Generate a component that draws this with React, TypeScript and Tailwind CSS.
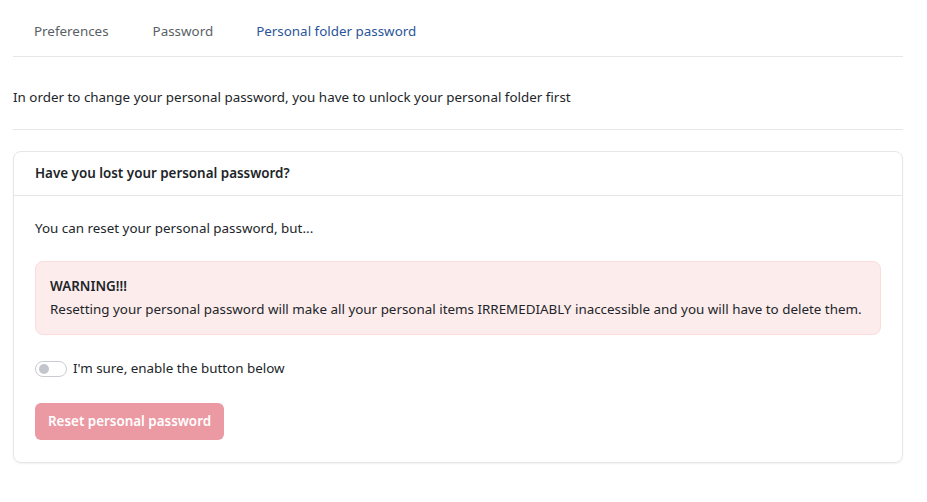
import { useState } from "react";

export default function App() {
  const [sure, setSure] = useState(false);

  return (
    <div className="min-h-screen bg-white px-[13px] text-[13.4px] text-[#212529] [font-family:'Noto_Sans',sans-serif]">
      {/* Tabs */}
      <div className="flex w-[890px] border-b border-[#e4e6e8]">
        <div className="pl-[21px] pr-[22px] pt-[21px] pb-[14px] leading-[21px] text-[#5a5f66]">Preferences</div>
        <div className="pl-[22px] pr-[21px] pt-[21px] pb-[14px] leading-[21px] text-[#5a5f66]">Password</div>
        <div className="px-[22px] pt-[21px] pb-[14px] leading-[21px] text-[#2a5599]">Personal folder password</div>
      </div>

      <p className="mt-[30px] mb-[21px] leading-[21px]">
        In order to change your personal password, you have to unlock your personal folder first
      </p>
      <div className="w-[890px] border-t border-[#e4e6e8]" />

      {/* Card */}
      <div className="mt-[21px] w-[890px] rounded-lg border border-[#e4e6e8] shadow-[0_1px_2px_rgba(0,0,0,0.06)]">
        <div className="flex h-[44px] items-center border-b border-[#e4e6e8] px-[21px] font-semibold">
          Have you lost your personal password?
        </div>
        <div className="px-[21px] pt-[22px] pb-[22px]">
          <p className="leading-[21px]">You can reset your personal password, but...</p>

          <div className="mt-[22px] rounded-lg border border-[#fadcdc] bg-[#fdecec] px-[14px] pt-[13px] pb-[13px] leading-[23px]">
            <div className="font-semibold">WARNING!!!</div>
            <div className="whitespace-nowrap">
              Resetting your personal password will make all your personal items IRREMEDIABLY inaccessible and you will have to delete them.
            </div>
          </div>

          <label className="mt-[23px] flex items-center gap-[6px] leading-[21px]">
            <button
              type="button"
              onClick={() => setSure(!sure)}
              className="flex h-[16px] w-[32px] items-center rounded-full border border-[#c9ccd1] bg-white px-[3px]"
            >
              <span className="h-[10px] w-[10px] rounded-full bg-[#c3c6cc]" />
            </button>
            I'm sure, enable the button below
          </label>

          <button
            type="button"
            disabled={!sure}
            className="mt-[24px] h-[37px] rounded-md bg-[#eb99a3] px-[13px] text-[13.4px] font-semibold text-white"
          >
            Reset personal password
          </button>
        </div>
      </div>
    </div>
  );
}
